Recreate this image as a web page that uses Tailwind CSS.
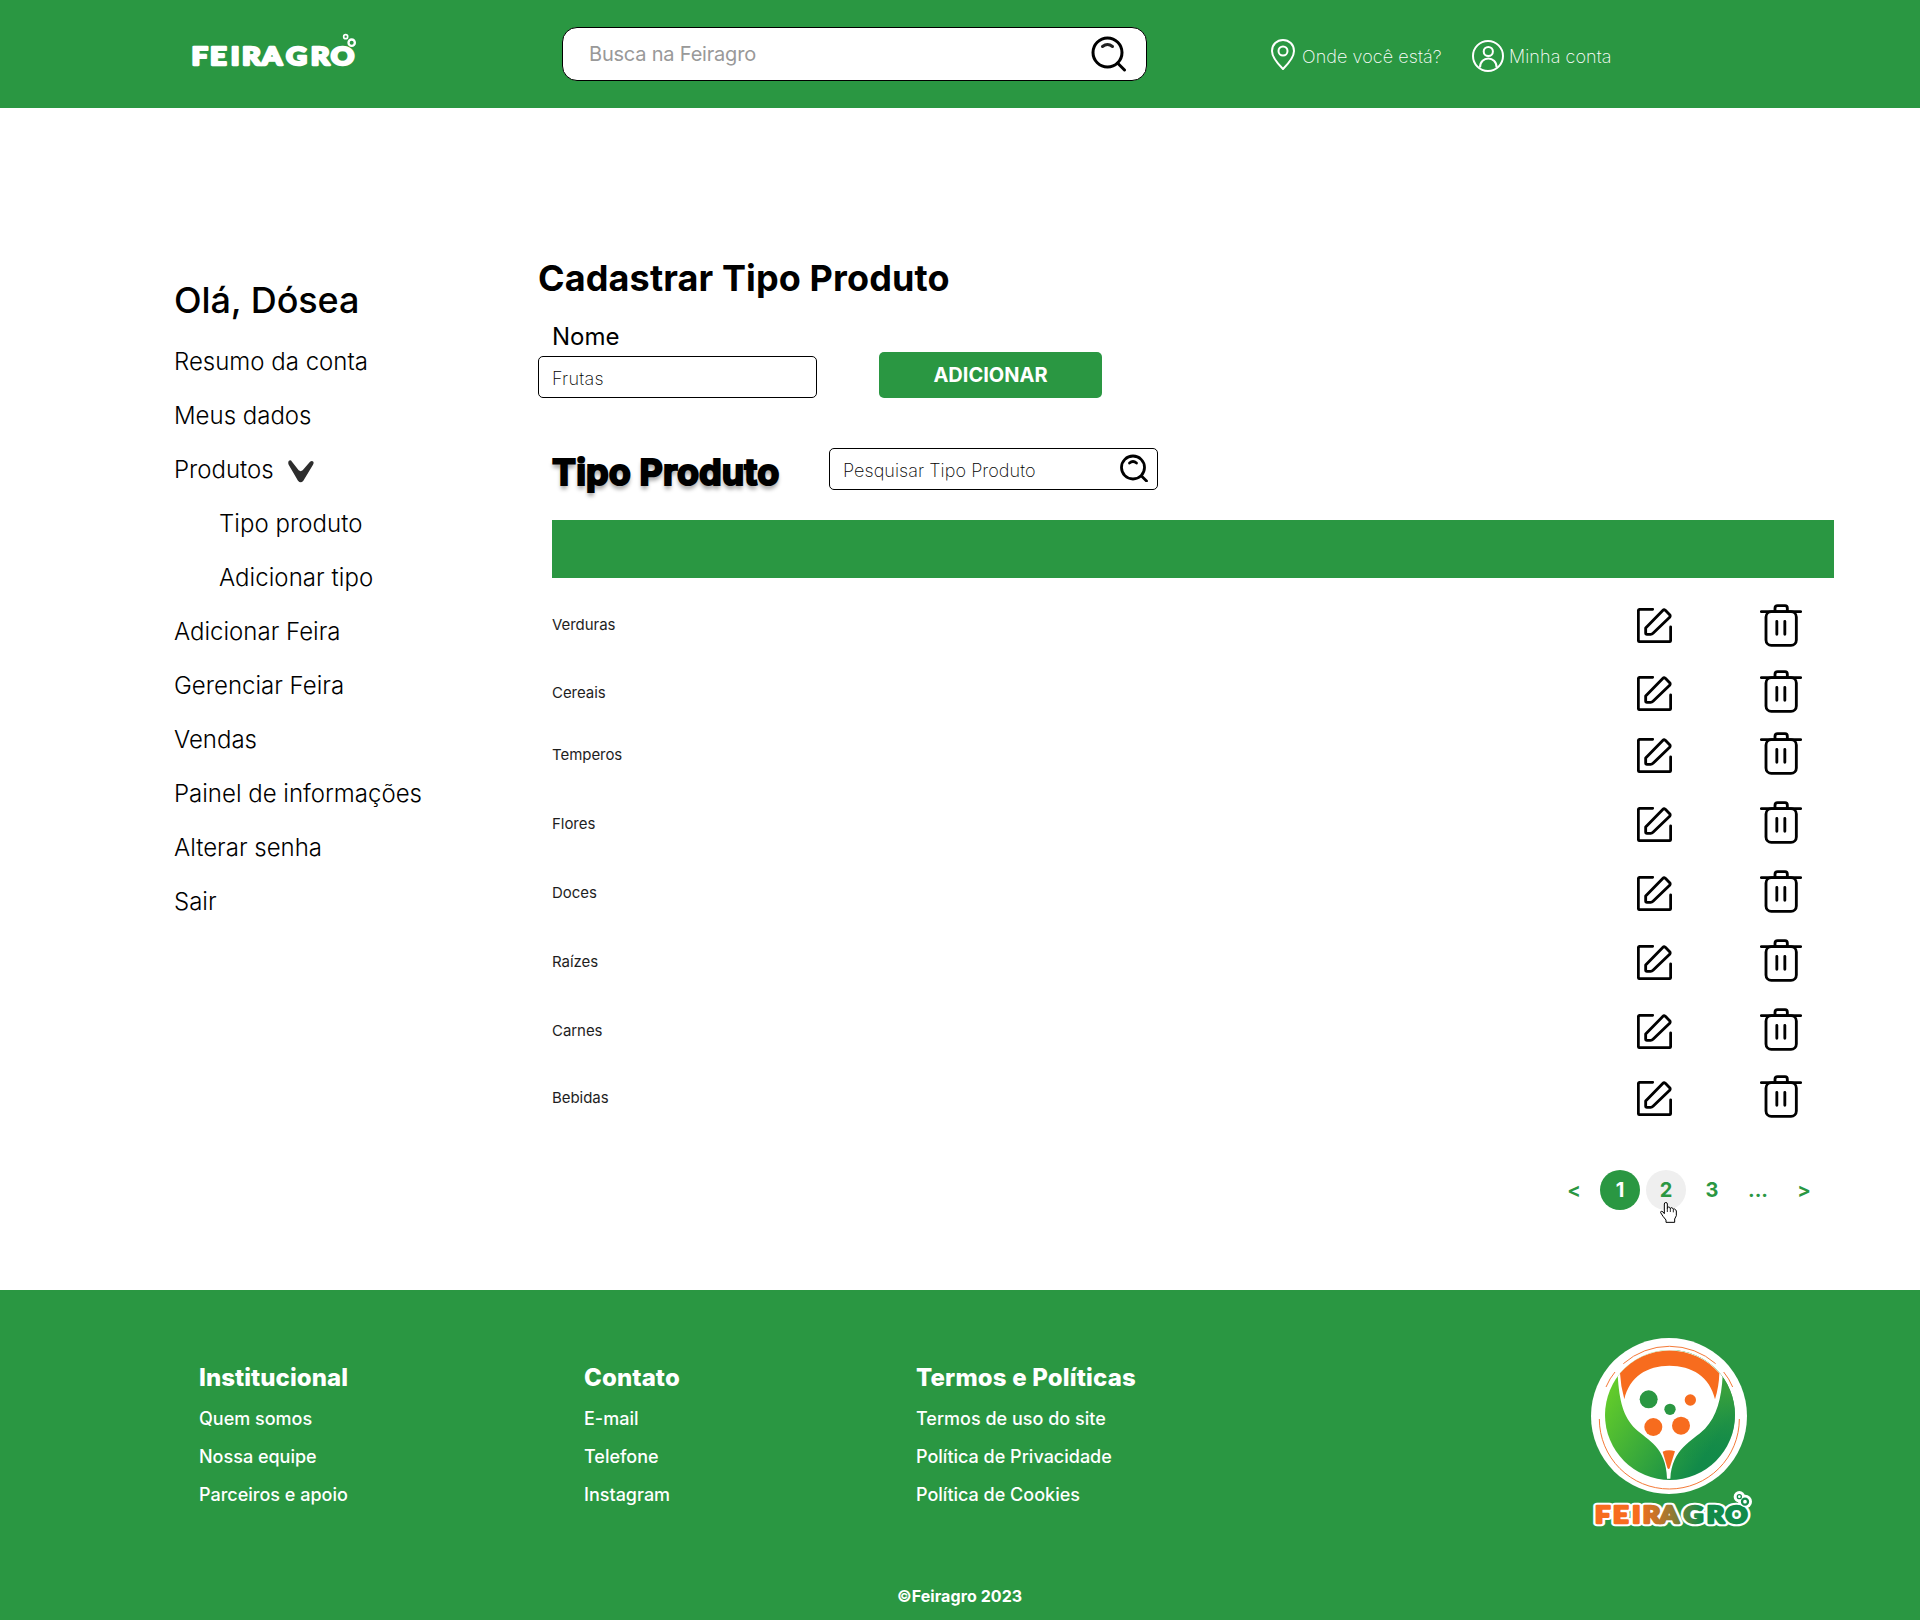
<!DOCTYPE html>
<html lang="pt-BR">
<head>
<meta charset="utf-8">
<title>Feiragro</title>
<script src="https://cdn.jsdelivr.net/npm/@tailwindcss/browser@4"></script>
</head>
<body class="w-[1920px] h-[1620px] bg-white text-black font-['Inter',sans-serif] overflow-hidden">
<svg class="hidden">
  <symbol id="edit" viewBox="0 0 105 105"><g fill="none" stroke="#000" stroke-width="8.500" stroke-linecap="round" stroke-linejoin="round"><path d="M47 4H9Q4 4 4 9V96Q4 101 9 101H96Q101 101 101 96V57"/><path d="M26 60L78 7Q81 4 85 7L98 20Q101 24 98 28L48 76Q45 79 41 79H30Q26 79 26 75Z"/></g></symbol>
  <symbol id="trash" viewBox="0 0 126 129"><g fill="none" stroke="#000" stroke-width="8.500" stroke-linecap="round"><path d="M4 23H122M45 21V13Q45 5 53 5H75Q82 5 82 13V21M50.500 52V91M74.500 52V91"/><rect x="18" y="23" width="91" height="101" rx="16"/></g></symbol>
  <symbol id="search" viewBox="0 0 36 36"><g fill="none" stroke="#000" stroke-width="3" stroke-linecap="round"><circle cx="16.500" cy="16.500" r="14.500"/><path d="M26.500 27L33.500 34"/><path d="M11.500 10.500Q16.500 6.500 21.500 10.500" stroke="#222"/></g></symbol>
</svg>

<header class="flex h-[108px] bg-[#2a9742]">
  <svg class="w-[190px] h-[60px] ml-[170px] mt-5 shrink-0" viewBox="0 0 570 180">
    <text transform="scale(1.16 1)" y="134" x="55.500 103.500 157 186 237 300 364 416" font-family="Lato" font-weight="900" font-size="75" fill="#fff" stroke="#fff" stroke-width="7" stroke-linejoin="round">FEIRAGRO</text>
    <g fill="none" stroke="#fff"><circle cx="527" cy="50" r="6" stroke-width="5"/><circle cx="545" cy="68" r="9.500" stroke-width="7" fill="#2a9742"/></g>
  </svg>
  <div class="flex items-center justify-between w-[585px] h-[54px] ml-[202px] mt-[27px] pl-[26px] pr-[19px] bg-white border border-black rounded-[15px] shrink-0">
    <span class="text-[20px] tracking-[-0.2px] text-[#999999]">Busca na Feiragro</span>
    <svg class="w-9 h-9"><use href="#search"/></svg>
  </div>
  <a class="flex ml-[124px] mt-[39px] h-[33px]">
    <svg class="w-6 h-[31px]" viewBox="0 0 24 31" fill="none" stroke="#fff" stroke-width="2"><path d="M12 30C9.500 27.500 1 18.500 1 12C1 5.500 6 1 12 1S23 5.500 23 12C23 18.500 14.500 27.500 12 30Z" stroke-linejoin="round"/><circle cx="12" cy="12" r="4.500"/></svg>
    <span class="ml-[7px] mt-[3px] w-[140px] text-[18px] leading-[30px] tracking-[0.08px] font-extralight text-white whitespace-nowrap">Onde você está?</span>
  </a>
  <a class="flex ml-[30px] mt-10 h-8">
    <svg class="w-8 h-8" viewBox="0 0 32 32" fill="none" stroke="#fff" stroke-width="2"><circle cx="16" cy="16" r="15"/><circle cx="16.300" cy="11.500" r="4.600"/><path d="M8 27.500C8 15.500 24.600 15.500 24.600 27.500"/></svg>
    <span class="ml-[5px] mt-[2px] text-[18px] leading-[30px] tracking-[0.08px] font-extralight text-white whitespace-nowrap">Minha conta</span>
  </a>
</header>

<main class="flex h-[1182px]">
  <aside class="w-[538px] pl-[174px] pt-[165px] shrink-0">
    <h2 class="text-[36px] leading-[54px] tracking-[-0.1px] font-medium mb-2">Olá, Dósea</h2>
    <ul class="text-[24px] leading-[54px] font-light">
      <li>Resumo da conta</li>
      <li>Meus dados</li>
      <li class="flex items-center gap-[14px]">Produtos
        <svg class="w-[26px] h-[23px] mt-[3px]" viewBox="0 0 78 69"><path fill="#2d2d2d" d="M3 2Q8 -1 12 5L32 31Q38 36 44 31L66 5Q72 1 76 5Q78 9 75 14L46 62Q38 72 30 62L2 14Q-1 6 3 2Z"/></svg>
      </li>
      <li class="pl-[45px] tracking-[0.05px]">Tipo produto</li>
      <li class="pl-[45px] tracking-[0.05px]">Adicionar tipo</li>
      <li>Adicionar Feira</li>
      <li>Gerenciar Feira</li>
      <li>Vendas</li>
      <li>Painel de informações</li>
      <li>Alterar senha</li>
      <li>Sair</li>
    </ul>
  </aside>

  <section class="w-[1296px] pt-[148px]">
    <h1 class="text-[36px] leading-[44px] tracking-[0.12px] font-bold">Cadastrar Tipo Produto</h1>
    <div class="flex items-end gap-[62px] mt-[22px]">
      <div>
        <label class="block pl-[14px] text-[24px] leading-[30px]">Nome</label>
        <div class="w-[279px] h-[42px] mt-[4px] pl-[13px] pt-[2px] border border-black rounded-[5px] text-[18px] leading-[40px] tracking-[0.25px] font-extralight">Frutas</div>
      </div>
      <button class="w-[223px] h-[46px] rounded-[5px] bg-[#2a9742] text-white text-[20px] font-bold">ADICIONAR</button>
    </div>
    <div class="flex h-[42px] mt-[50px] pl-[14px]">
      <h2 class="w-[277px] pt-[2px] text-[36px] leading-[44px] tracking-[0.1px] font-bold [-webkit-text-stroke:2px_#000] [text-shadow:0_4px_4px_rgba(0,0,0,0.4)]">Tipo Produto</h2>
      <div class="flex justify-between w-[329px] h-[42px] pl-[13px] pr-[9px] pt-[2px] border border-black rounded-[5px] text-[18px] leading-[40px] tracking-[0.06px] font-extralight">Pesquisar Tipo Produto
        <svg class="w-7 h-7 mt-[3px]" viewBox="0 0 28 28" fill="none" stroke="#000" stroke-width="2.800" stroke-linecap="round"><circle cx="13" cy="13.500" r="11.500"/><path d="M21.500 22L26.500 27"/><path d="M9.500 9Q13 6 16.500 9"/></svg>
      </div>
    </div>
    <div class="ml-[14px] mt-[30px] h-[58px] bg-[#2a9742]"></div>
    <div class="ml-[14px] mt-[25px] text-[15px] tracking-[-0.05px] text-[#1e1e1e]">
      <div class="flex items-center h-11"><span class="w-[1085px]">Verduras</span><svg class="w-[35px] h-[35px] mt-px"><use href="#edit"/></svg><svg class="w-[42px] h-[43px] ml-[88px] mt-px"><use href="#trash"/></svg></div>
      <div class="flex items-center h-11 mt-6"><span class="w-[1085px]">Cereais</span><svg class="w-[35px] h-[35px] mt-px"><use href="#edit"/></svg><svg class="w-[42px] h-[43px] ml-[88px] -mt-[3px]"><use href="#trash"/></svg></div>
      <div class="flex items-center h-11 mt-[18px]"><span class="w-[1085px]">Temperos</span><svg class="w-[35px] h-[35px] mt-px"><use href="#edit"/></svg><svg class="w-[42px] h-[43px] ml-[88px] -mt-[3px]"><use href="#trash"/></svg></div>
      <div class="flex items-center h-11 mt-[25px]"><span class="w-[1085px]">Flores</span><svg class="w-[35px] h-[35px] mt-px"><use href="#edit"/></svg><svg class="w-[42px] h-[43px] ml-[88px] -mt-[3px]"><use href="#trash"/></svg></div>
      <div class="flex items-center h-11 mt-[25px]"><span class="w-[1085px]">Doces</span><svg class="w-[35px] h-[35px] mt-px"><use href="#edit"/></svg><svg class="w-[42px] h-[43px] ml-[88px] -mt-[3px]"><use href="#trash"/></svg></div>
      <div class="flex items-center h-11 mt-[25px]"><span class="w-[1085px]">Raízes</span><svg class="w-[35px] h-[35px] mt-px"><use href="#edit"/></svg><svg class="w-[42px] h-[43px] ml-[88px] -mt-[3px]"><use href="#trash"/></svg></div>
      <div class="flex items-center h-11 mt-[25px]"><span class="w-[1085px]">Carnes</span><svg class="w-[35px] h-[35px] mt-px"><use href="#edit"/></svg><svg class="w-[42px] h-[43px] ml-[88px] -mt-[3px]"><use href="#trash"/></svg></div>
      <div class="flex items-center h-11 mt-[23px]"><span class="w-[1085px]">Bebidas</span><svg class="w-[35px] h-[35px] mt-px"><use href="#edit"/></svg><svg class="w-[42px] h-[43px] ml-[88px] -mt-[3px]"><use href="#trash"/></svg></div>
    </div>
    <nav class="flex justify-end gap-[6px] mt-[50px] pr-[10px] text-center text-[20px] leading-[40px] font-bold text-[#2a9742]">
      <span class="w-10">&lt;</span>
      <span class="w-10 rounded-full bg-[#2a9742] text-white">1</span>
      <span class="relative w-10 rounded-full bg-[#efefef]">2
        <svg class="absolute left-[14px] top-8 w-[17px] h-[21px]" viewBox="0 0 51 63"><path d="M13 33V6Q13 1.500 17.500 1.500T22 6V20Q22 15 26 15T31 20Q32 17 35 17T40 22Q41 20 44 21T49 27V41L44 51V61H18V54L9 43L2 32Q1 28 5 28Q9 28 13 35Z" fill="#fff" stroke="#000" stroke-width="3" stroke-linejoin="round"/><path d="M22 20V30M31 20V30M40 22V31" stroke="#000" stroke-width="2.500"/></svg>
      </span>
      <span class="w-10">3</span>
      <span class="w-10">...</span>
      <span class="w-10">&gt;</span>
    </nav>
  </section>
</main>

<footer class="flex flex-col h-[330px] bg-[#2a9742] text-white">
  <div class="flex h-[290px] pl-[199px] text-[18px] leading-[38px] font-medium">
    <div class="w-[385px] pt-[73px]"><h3 class="text-[24px] leading-[30px] tracking-[0.05px] font-extrabold mb-[7px]">Institucional</h3><p>Quem somos</p><p>Nossa equipe</p><p>Parceiros e apoio</p></div>
    <div class="w-[332px] pt-[73px]"><h3 class="text-[24px] leading-[30px] tracking-[0.1px] font-extrabold mb-[7px]">Contato</h3><p>E-mail</p><p>Telefone</p><p>Instagram</p></div>
    <div class="w-[654px] pt-[73px]"><h3 class="text-[24px] leading-[30px] tracking-[0.16px] font-extrabold mb-[7px]">Termos e Políticas</h3><p>Termos de uso do site</p><p>Política de Privacidade</p><p>Política de Cookies</p></div>
    <svg class="w-[200px] h-[220px] mt-[30px]" viewBox="0 0 600 660">
      <defs>
        <linearGradient id="leaf" x1="110" y1="230" x2="430" y2="440" gradientUnits="userSpaceOnUse"><stop offset="0" stop-color="#62cb2b"/><stop offset=".9" stop-color="#128a49"/></linearGradient>
        <linearGradient id="leafR" x1="440" y1="210" x2="420" y2="430" gradientUnits="userSpaceOnUse"><stop offset="0" stop-color="#38a03d"/><stop offset="1" stop-color="#128a49" stop-opacity="0"/></linearGradient>
        <linearGradient id="word" x1="67" y1="0" x2="457" y2="0" gradientUnits="userSpaceOnUse"><stop offset=".28" stop-color="#f76c1e"/><stop offset=".48" stop-color="#a4782f"/><stop offset=".7" stop-color="#128a49"/></linearGradient>
        <clipPath id="disc"><circle cx="300" cy="285" r="195"/></clipPath>
      </defs>
      <circle cx="297" cy="288" r="234" fill="#fff"/>
      <circle cx="300" cy="285" r="195" fill="url(#leaf)"/>
      <g clip-path="url(#disc)"><rect x="300" y="80" width="200" height="410" fill="url(#leafR)"/>
      <path fill="#fff" d="M143 60V165C148 245 160 290 196 326C235 362 288 380 291 476H301C306 385 365 365 405 326C440 290 455 235 458 165V60Z"/></g>
      <path fill="#f76c1e" d="M150 160A196 196 0 0 1 448 160Q447 200 435 238C420 170 365 137 298 137C232 137 178 170 163 238Q152 200 150 160Z"/>
      <g fill="none" stroke="#f47a38" stroke-width="3"><path d="M160 131A210 210 0 0 1 437 131M108 201Q119 175 135 156M461 156Q477 175 488 201M88 297A210 210 0 0 0 508 297"/></g>
      <circle cx="236" cy="238" r="27" fill="#2a9742"/><circle cx="300" cy="268" r="17" fill="#2a9742"/>
      <g fill="#f76c1e"><circle cx="361" cy="240" r="17"/><circle cx="250" cy="321" r="27"/><circle cx="333" cy="317" r="27"/><path d="M278 395Q296 387 315 394L299 445Q295 450 292 443Z"/></g>
      <g fill="#fff"><circle cx="508" cy="530" r="17"/><circle cx="525" cy="545" r="21"/></g>
      <g transform="scale(1.16 1)" font-family="Lato" font-weight="900" font-size="70" stroke-linejoin="round">
        <text y="608" x="65 111 161 188 232 294 354 402" fill="#fff" stroke="#fff" stroke-width="20">FEIRAGRO</text>
        <text y="608" x="65 111 161 188 232 294 354 402" fill="url(#word)" stroke="url(#word)" stroke-width="7">FEIRAGRO</text>
      </g>
      <circle cx="525" cy="545" r="16" fill="#fff"/>
      <g fill="#fff" stroke="#128a49"><circle cx="508" cy="530" r="6" stroke-width="4"/><circle cx="525" cy="545" r="9" stroke-width="7"/></g>
    </svg>
  </div>
  <p class="pl-[897px] text-[16px] leading-8 tracking-[0.08px] font-bold">©Feiragro 2023</p>
</footer>
</body>
</html>
